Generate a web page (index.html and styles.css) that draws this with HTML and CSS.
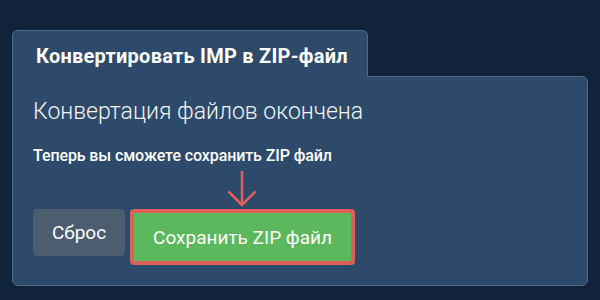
FILE: index.html
```html
<!DOCTYPE html>
<html lang="ru">
<head>
<meta charset="utf-8">
<link rel="stylesheet" href="styles.css">
</head>
<body>
<div class="panel">
  <div class="tab">Конвертировать IMP в ZIP-файл</div>
  <div class="card">
    <h2 class="heading">Конвертация файлов окончена</h2>
    <p class="note">Теперь вы сможете сохранить ZIP файл</p>
    <div class="actions">
      <button class="btn btn-reset">Сброс</button>
      <div class="save-wrap">
        <svg class="arrow" width="30" height="36" viewBox="0 0 30 36">
          <path d="M15 0 V34 M1.5 20.5 L15 34 L28.5 20.5" fill="none" stroke="#e0605a" stroke-width="2.5"/>
        </svg>
        <button class="btn btn-save">Сохранить ZIP файл</button>
      </div>
    </div>
  </div>
</div>
</body>
</html>
```

FILE: styles.css
```css
html, body {
  margin: 0;
  padding: 0;
  background: #11233a;
  font-family: Roboto, "Noto Sans", sans-serif;
  color: #fff;
}
.panel {
  padding: 30px 12px 0 12px;
  width: 576px;
}
.tab {
  display: inline-block;
  position: relative;
  z-index: 1;
  margin-bottom: -1px;
  box-sizing: border-box;
  height: 47px;
  width: 356px;
  padding: 2px 0 0 23px;
  line-height: 46px;
  font-size: 20px;
  font-weight: 700;
  letter-spacing: 0.25px;
  background: #2d4a6b;
  border: 1px solid #4f6a8a;
  border-bottom: none;
  border-radius: 6px 6px 0 0;
}
.card {
  box-sizing: border-box;
  height: 210px;
  background: #2d4a6b;
  border: 1px solid #4f6a8a;
  border-radius: 0 6px 6px 6px;
  padding: 20px 20px 0 20px;
}
.heading {
  margin: 0;
  font-size: 23px;
  font-weight: 300;
  line-height: 30px;
  color: #f2f4f7;
}
.note {
  margin: 19px 0 0 0;
  font-size: 16px;
  font-weight: 500;
  line-height: 20px;
  letter-spacing: -0.1px;
}
.actions {
  display: flex;
  align-items: flex-start;
  gap: 5px;
  margin-top: 43px;
}
.btn {
  font-family: Roboto, "Noto Sans", sans-serif;
  color: #fff;
  border: none;
  cursor: pointer;
}
.btn-reset {
  width: 92px;
  height: 47px;
  background: #4b5d6f;
  border-radius: 4px;
  font-size: 19px;
  font-weight: 400;
}
.save-wrap {
  position: relative;
}
.arrow {
  position: absolute;
  left: 97px;
  top: -38px;
}
.btn-save {
  display: block;
  width: 225px;
  height: 56px;
  background: #5cb85c;
  border: 4px solid #dc5f5a;
  border-radius: 4px;
  font-size: 19px;
  font-weight: 400;
}
```
